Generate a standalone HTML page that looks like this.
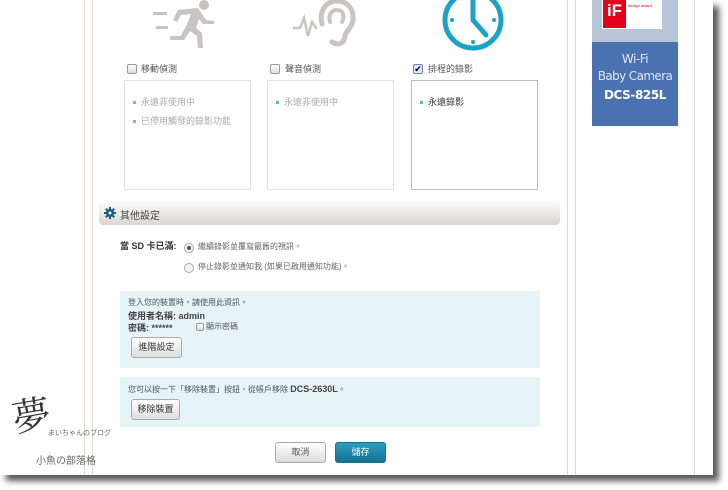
<!DOCTYPE html><html><head><meta charset="utf-8"><style>
body{margin:0;width:728px;height:490px;background:#fff;position:relative;overflow:hidden;font-family:"Liberation Sans","Noto Sans CJK TC",sans-serif;}
.abs{position:absolute}
.page{left:0;top:0;width:713px;height:475px;background:#fff;box-shadow:6px 6px 6px rgba(0,0,0,.65);}
.vl{position:absolute;top:0;height:475px;width:1px;background:#ddd8d6}
.t{position:absolute;font-size:9px;color:#555;white-space:nowrap}
.box{position:absolute;top:80px;width:125px;height:108px;border:1px solid #e2e2e2;background:#fff}
.box2{border:1px solid #bbb}
.li{position:absolute;left:8px;font-size:9px;color:#aaa}
.li:before{content:"";display:inline-block;width:3px;height:3px;background:#5bc0d0;margin-right:5px;vertical-align:middle}
.cb{position:absolute;width:8px;height:8px;border:1px solid #999;background:linear-gradient(#fff,#ddd);border-radius:2px}
.btn{position:absolute;height:19px;border:1px solid #aaa;border-radius:3px;background:linear-gradient(#fff,#ddd);font-size:9px;color:#333;text-align:center;line-height:19px}
.rad{position:absolute;width:8px;height:8px;border:1px solid #aaa;border-radius:50%;background:#f4f4f4}
</style></head><body>
<div class="abs page"></div>
<div class="vl" style="left:84px"></div>
<div class="vl" style="left:92px"></div>
<div class="vl" style="left:567px"></div>
<div class="vl" style="left:575px"></div>
<div class="vl" style="left:694px"></div>
<svg class="abs" style="left:150px;top:0" width="65" height="50" viewBox="0 0 65 50" fill="#c9c4c1">
<circle cx="54" cy="5" r="5"/>
<rect x="3" y="12" width="14" height="3"/><rect x="6" y="26" width="12" height="3"/>
<path d="M28 10 L48 8 L56 20 L64 21 L64 24 L53 24 L49 19 L46 28 L52 33 L53 48 L48 48 L47 36 L40 31 L34 40 L20 40 L20 36 L31 36 L38 22 L41 14 L31 15 L27 22 L23 20 Z"/>
</svg>
<svg class="abs" style="left:292px;top:0" width="65" height="50" viewBox="0 0 65 50" fill="none" stroke="#c9c4c1" stroke-width="5" stroke-linecap="round">
<path d="M2 28 L8 28 L12 18 L16 36 L20 22 L24 28" stroke-width="2.5"/>
<path d="M30 24 C27 12 33 1 45 1 C56 1 62 10 61 20 C60 28 54 30 53 36 C52 44 46 46 40 42"/>
<path d="M38 22 C36 14 40 10 45 10 C51 10 53 16 50 22" stroke-width="4"/>
</svg>
<svg class="abs" style="left:440px;top:-10px" width="66" height="64" viewBox="0 0 66 64">
<circle cx="33" cy="30" r="28" fill="none" stroke="#1aa3c4" stroke-width="5"/>
<line x1="33" y1="10" x2="33" y2="28" stroke="#1aa3c4" stroke-width="5" stroke-linecap="round"/>
<line x1="33" y1="30" x2="46" y2="45" stroke="#1aa3c4" stroke-width="5" stroke-linecap="round"/>
<circle cx="12" cy="30" r="2" fill="#1aa3c4"/><circle cx="54" cy="30" r="2" fill="#1aa3c4"/><circle cx="33" cy="52" r="2" fill="#1aa3c4"/>
</svg>
<div class="cb" style="left:127px;top:64px"></div><div class="t" style="left:141px;top:62px">移動偵測</div>
<div class="cb" style="left:270px;top:64px"></div><div class="t" style="left:285px;top:62px">聲音偵測</div>
<div class="cb" style="left:413px;top:64px;border-color:#6a80c8;background:#e0e8ff;font-size:9px;line-height:8px;text-align:center;color:#000">✔</div><div class="t" style="left:428px;top:62px">排程的錄影</div>
<div class="box" style="left:124px"><div class="li" style="top:14px">永遠非使用中</div><div class="li" style="top:33px">已停用觸發的錄影功能</div></div>
<div class="box" style="left:267px"><div class="li" style="top:14px">永遠非使用中</div></div>
<div class="box box2" style="left:411px;top:80px"><div class="li" style="top:14px;color:#333">永遠錄影</div></div>
<div class="abs" style="left:592px;top:0;width:86px;height:42px;background:#b8c4d8"></div>
<div class="abs" style="left:602px;top:0;width:60px;height:29px;background:#fff"></div>
<div class="abs" style="left:603px;top:0;width:23px;height:28px;background:#e2001a;color:#fff;font-weight:bold;font-size:17px;line-height:22px;text-align:center">iF</div>
<div class="abs" style="left:628px;top:3px;font-size:4px;color:#e2001a">design award</div>
<div class="abs" style="left:592px;top:42px;width:86px;height:84px;background:#4a72b0;color:#fff;text-align:center;font-family:'DejaVu Sans',sans-serif">
<div style="margin-top:10px;font-size:12px;color:#dde6f3;letter-spacing:-0.5px">Wi-Fi</div>
<div style="font-size:12px;color:#dde6f3;margin-top:3px;letter-spacing:-0.6px">Baby Camera</div>
<div style="font-size:12px;font-weight:bold;margin-top:5px;letter-spacing:-0.4px">DCS-825L</div></div>
<div class="abs" style="left:99px;top:201px;width:461px;height:24px;border-radius:4px;background:linear-gradient(#fdfdfd,#d9d6d5);"></div>
<svg class="abs" style="left:104px;top:207px" width="12" height="12" viewBox="0 0 12 12"><g fill="#1a5f7a"><circle cx="6" cy="6" r="4"/><rect x="5" y="0" width="2" height="12"/><rect x="0" y="5" width="12" height="2"/><rect x="5" y="0" width="2" height="12" transform="rotate(45 6 6)"/><rect x="5" y="0" width="2" height="12" transform="rotate(-45 6 6)"/></g><circle cx="6" cy="6" r="1.5" fill="#fff"/></svg>
<div class="t" style="left:120px;top:207px;font-size:10px;color:#444">其他設定</div>
<div class="t" style="left:120px;top:239px;font-size:9px;color:#333"><b>當 SD 卡已滿:</b></div>
<div class="rad" style="left:184px;top:243px"><div style="width:4px;height:4px;background:#555;border-radius:50%;margin:2px"></div></div>
<div class="t" style="left:198px;top:241px;font-size:8px;color:#666">繼續錄影並覆寫最舊的視訊。</div>
<div class="rad" style="left:184px;top:263px"></div>
<div class="t" style="left:198px;top:261px;font-size:8px;color:#666">停止錄影並通知我 (如果已啟用通知功能)。</div>
<div class="abs" style="left:120px;top:291px;width:420px;height:77px;background:#e6f4f8"></div>
<div class="t" style="left:128px;top:297px;font-size:8px;color:#555">登入您的裝置時，請使用此資訊。</div>
<div class="t" style="left:128px;top:309px;font-size:9px;color:#444"><b>使用者名稱: admin</b></div>
<div class="t" style="left:128px;top:321px;font-size:9px;color:#444"><b>密碼: ******</b></div>
<div class="cb" style="left:196px;top:323px;width:6px;height:6px"></div><div class="t" style="left:206px;top:321px;font-size:8px">顯示密碼</div>
<div class="btn" style="left:131px;top:337px;width:49px">進階設定</div>
<div class="abs" style="left:120px;top:377px;width:420px;height:50px;background:#e6f4f8"></div>
<div class="t" style="left:128px;top:384px;font-size:8px;color:#555">您可以按一下「移除裝置」按鈕，從帳戶移除 <b style="font-size:9px;color:#444">DCS-2630L</b>。</div>
<div class="btn" style="left:131px;top:399px;width:47px">移除裝置</div>
<div class="btn" style="left:275px;top:442px;width:49px;color:#555">取消</div>
<div class="btn" style="left:335px;top:442px;width:49px;background:linear-gradient(#2a9ec0,#16718f);border-color:#16718f;color:#fff">儲存</div>
<div class="t" style="left:12px;top:385px;font-size:38px;color:#333;font-family:'Noto Serif CJK SC',serif;transform:rotate(-10deg)">夢</div>
<div class="t" style="left:48px;top:428px;font-size:7px;color:#666">まいちゃんのブログ</div>
<div class="t" style="left:36px;top:452px;font-size:10px;color:#666">小魚の部落格</div>
</body></html>
